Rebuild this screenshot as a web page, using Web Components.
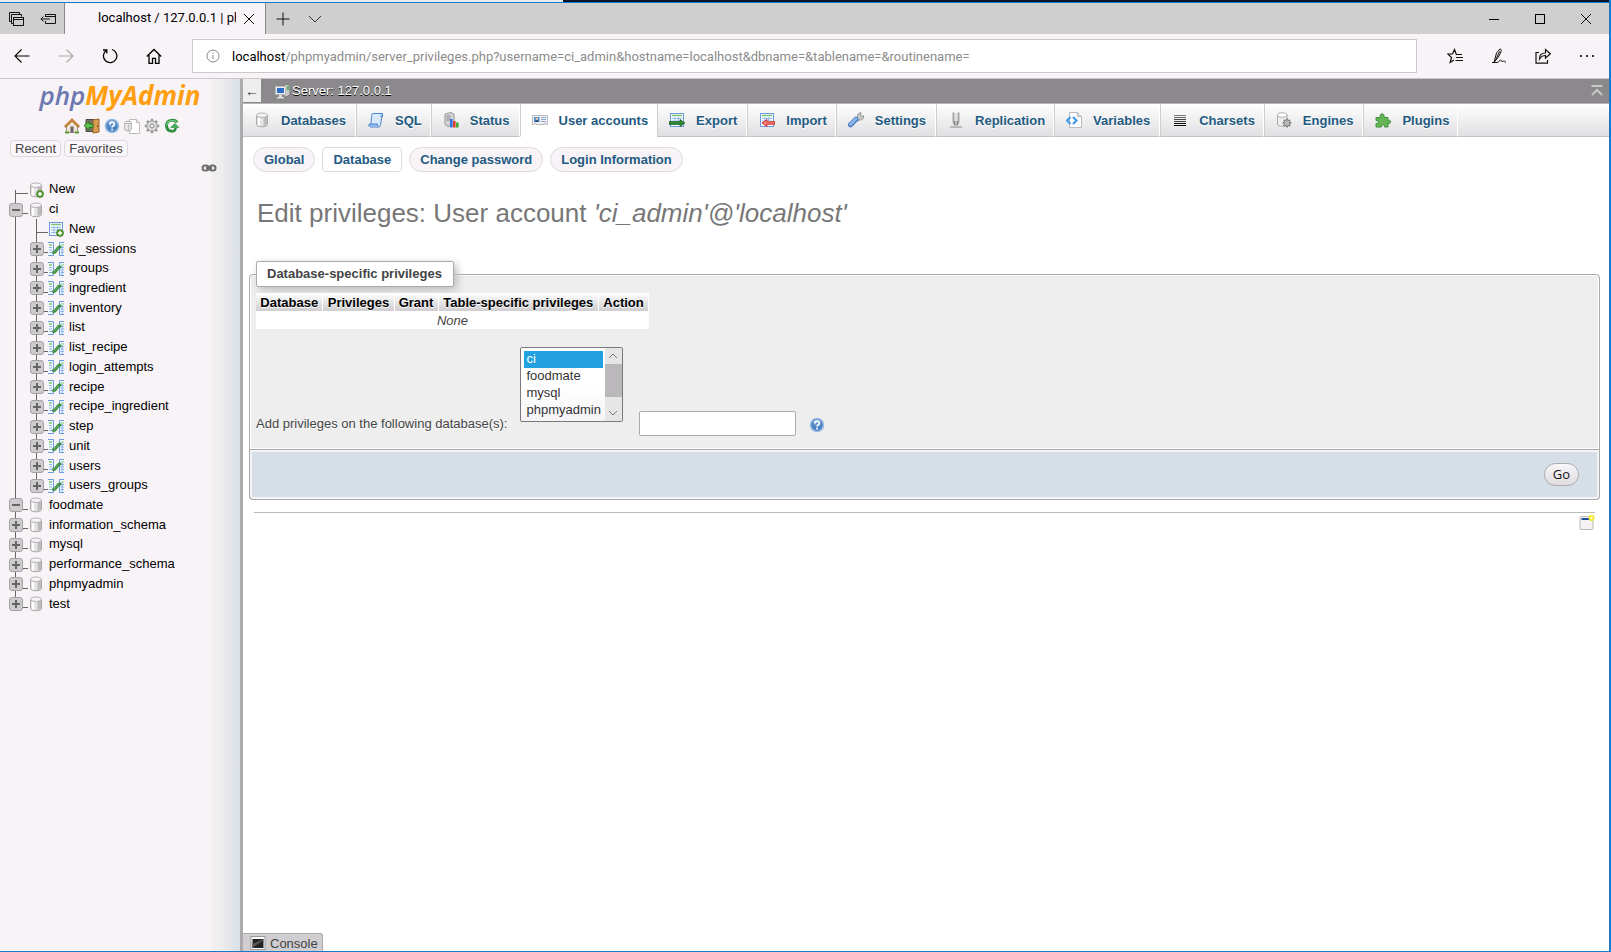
<!DOCTYPE html>
<html lang="en">
<head>
<meta charset="utf-8">
<title>localhost / 127.0.0.1 | phpMyAdmin</title>
<style>
html,body{height:100%}
body{margin:0;font-family:"Liberation Sans",Arial,sans-serif;font-size:13px;color:#444;background:#fff}
</style>
</head>
<body>
<browser-window>
  <browser-titlebar slot="title">localhost / 127.0.0.1 | phpMyAdmin</browser-titlebar>
  <browser-toolbar slot="tools"></browser-toolbar>
  <pma-navigation slot="side"></pma-navigation>
  <pma-page slot="main"></pma-page>
</browser-window>
<script>
const define=(name,html,setup)=>{
  const t=document.createElement('template');
  t.innerHTML='<style>:host,*{box-sizing:border-box}</style>'+html;
  customElements.define(name,class extends HTMLElement{
    constructor(){super();this.attachShadow({mode:'open'}).append(t.content.cloneNode(true));}
    connectedCallback(){if(setup)setup.call(this,this.shadowRoot);}
  });
};

const DB='<path d="M2.5 3.5v9c0 3 11 3 11 0v-9" fill="#e4e2e4" stroke="#aaa"/><path d="M9.500 5v9c2 0 3.500-1 3.500-2V4z" fill="#bdbbbd"/><path d="M4 6v7l2 1V6z" fill="#fff"/><ellipse cx="8" cy="3.200" rx="5.500" ry="2.200" fill="#f6f4f6" stroke="#b5b3b5"/>';
const PLUS='<circle cx="12" cy="12" r="3.5" fill="#5a9e32" stroke="#3d7a1d" stroke-width=".7"/><path d="M12 10v4M10 12h4" stroke="#fff" stroke-width="1.4"/>';
const GRID='<rect x="1.5" y="1.5" width="13" height="13" fill="#f4f9ff" stroke="#6b9add"/><path d="M3 3.5h10" stroke="#7cc36a" stroke-width="1.4"/><path d="M3 6.5h10M3 9h10M3 11.500h10M6 5v8M9.500 5v8" stroke="#9cbce8"/>';
const GEAR='<g stroke="#999" stroke-width="2.4"><path d="M8 .8v14.400M.8 8h14.400M2.900 2.900l10.200 10.200M13.100 2.900L2.900 13.100"/></g><circle cx="8" cy="8" r="5.2" fill="#ddd" stroke="#999"/><circle cx="8" cy="8" r="2" fill="#f7f3f7" stroke="#888"/>';
const ICONS={
 db:DB,
 dbnew:DB+PLUS,
 tablenew:GRID+PLUS,
 table:'<path d="M0 1.500h5.500v13H0" fill="#f4f9ff" stroke="#6b9add"/><path d="M1 4h3" stroke="#7cc36a" stroke-width="1.500"/><path d="M1 6.500h3M1 9h3M1 11.500h3" stroke="#8db2e6"/><path d="M16 1.500h-4.500v13H16" fill="#f4f9ff" stroke="#6b9add"/><path d="M13 4h3" stroke="#7cc36a"/><path d="M12.500 6.500h3.500M12.500 9h3.500M12.500 11.500h3.500M14.200 5v9" stroke="#8db2e6"/><path d="M5.500 11.500l1.500-.5 3.500-4.500 1.500-.5" fill="none" stroke="#3c8d40" stroke-width="3" stroke-linecap="round"/><path d="M5.500 11.200l1.500-.5 3.500-4.500" fill="none" stroke="#69b56b" stroke-width="1"/>',
 home:'<path d="M2.500 8v6.500h11V8L8 3z" fill="#ece5d8" stroke="#9a8f80"/><path d="M.8 8.800L8 2l7.200 6.800" fill="none" stroke="#b5691d" stroke-width="2.400"/><path d="M1 8.200L8 1.600l7 6.600" fill="none" stroke="#e1a153"/><rect x="6.500" y="8.500" width="3" height="6" fill="#666"/><path d="M1 14.500h4M11 14.500h4" stroke="#5a9f3a" stroke-width="2"/>',
 exit:'<path d="M2 1.500h8v12H2z" fill="#777069" stroke="#4d4841"/><path d="M9 2l6-1v13l-6 1z" fill="#d89c52" stroke="#9a6222"/><path d="M13.500 7.500v1.500" stroke="#5b3a10"/><path d="M0 7.500L5 3.500v2.500h4v3.500H5V12z" fill="#62bf4d" stroke="#2d7c22"/>',
 help:'<circle cx="8" cy="8" r="6.500" fill="#4a82c4" stroke="#9dbbe0" stroke-width="1.600"/><circle cx="8" cy="5.500" r="4" fill="#7ba6da" opacity=".6"/><path d="M5.800 6.500c0-3 4.600-3 4.600-.3 0 1.600-2.300 1.500-2.300 3.300" fill="none" stroke="#fff" stroke-width="1.700"/><rect x="7.200" y="10.700" width="1.800" height="1.700" fill="#fff"/>',
 docs:'<path d="M5.500 1.500h7l3 3v11h-10z" fill="#fff" stroke="#bbb"/><path d="M12.500 1.500v3h3" fill="#eee" stroke="#bbb"/><path d="M.8 4.500v7c0 1.500 6.500 1.500 6.500 0v-7" fill="#eee" stroke="#aaa"/><ellipse cx="4" cy="4.500" rx="3.200" ry="1.200" fill="#fff" stroke="#aaa"/><path d="M4.500 6.500v5" stroke="#bbb" stroke-width="1.500"/>',
 gear:GEAR,
 reload:'<path d="M13 4.500C11 .8 2.500 1.500 2.500 7.500c0 3.500 2.500 5.500 5.500 5.800" fill="none" stroke="#2f9140" stroke-width="3"/><path d="M12.500 4C10 1.500 3 2.500 2.800 7.500" fill="none" stroke="#7ccf7f" stroke-width="1.200"/><path d="M8 13.500c2.500 0 3.500-1.500 3.500-3.500" fill="none" stroke="#2f9140" stroke-width="2.600"/><path d="M6.500 9.500L11 5.500l4 4z" fill="#45a955" stroke="#2f9140" stroke-width=".6"/>',
 link:'<g fill="none" stroke="#6d6d6d" stroke-width="2"><rect x="1.500" y="5.500" width="6" height="5" rx="2.500"/><rect x="8.500" y="5.500" width="6" height="5" rx="2.500"/><path d="M5 8h6"/></g>',
 sql:'<path d="M4.500 1.500h10l-2 11c-.3 2-1 2.500-2.500 2.500H2c1.500 0 1-13.500 2.500-13.500z" fill="#d9eaff" stroke="#4a84cf"/><path d="M13 1.500c2 0 2 3 1 3h-1.500M1 14.500c-1-2 .5-3 1.500-2.500h7c0 2 .5 3 1.500 2.500" fill="#8db9ef" stroke="#4a84cf"/>',
 status:'<path d="M2 2l6-1.500 3 1.500v11l-6 1.500-3-2z" fill="#d4d2d4" stroke="#999"/><path d="M3.500 4h4M3.500 6h4M3.500 8h4" stroke="#888"/><rect x="7" y="7" width="2.600" height="8.500" fill="#3573e8"/><rect x="10" y="9" width="2.600" height="6.500" fill="#e23d28"/><rect x="13" y="10.500" width="2.600" height="5" fill="#3bad34"/>',
 users:'<path d="M.5 3.500h15v9H14v-1h-2v1H4v-1H2v1H.5z" fill="#f3f2f5" stroke="#b9b8bd"/><rect x="2" y="5" width="5.500" height="5" fill="#4b8bd9"/><circle cx="4.800" cy="6.700" r="1.200" fill="#f5c896"/><path d="M3 10c0-2.500 3.500-2.500 3.500 0z" fill="#39424f"/><path d="M9 5.500h5M9 7.500h5M9 9.500h5" stroke="#8ba5c9"/>',
 exp:GRID+'<path d="M0 9.500h11V7.500l5 3.500-5 3.500v-2H0z" fill="#2e8632" stroke="#14561a" stroke-width=".6"/>',
 imp:GRID+'<path d="M16 9.800H8V7.500L3 11l5 3.500v-2.300h8z" fill="#f08078" stroke="#d3201b" stroke-width=".9"/>',
 settings:'<path d="M9 6l1-4 3-1.500-.5 3 1.500 1L16 3.500c0 3-1.500 4.500-4.500 4.500L10 9z" fill="#c9c9c9" stroke="#888" stroke-width=".8"/><path d="M8 7.200L2.500 12.800" stroke="#4675bd" stroke-width="5" stroke-linecap="round"/><path d="M8 6.800L2.500 12.400" stroke="#8fb5ee" stroke-width="3" stroke-linecap="round"/>',
 repl:'<path d="M5.500 .5v9l1 3M10.500 .5v9l-1 3" fill="none" stroke="#a5a5a5" stroke-width="2"/><path d="M8 1v12" stroke="#e4e4e4" stroke-width="2"/><path d="M6.500 9v4h3V9" fill="#bbb" stroke="#888"/><path d="M2 15h12" stroke="#aaa" stroke-width="1.500"/>',
 vars:'<path d="M3.500.5h8l4 4v11h-12z" fill="#fcfbff" stroke="#bbb"/><path d="M11.500.5v4h4" fill="#ddd" stroke="#bbb"/><path d="M4.500 5L1 8.500 4.500 12M7 5l3.500 3.500L7 12" fill="none" stroke="#459be8" stroke-width="2.200"/>',
 chars:'<path d="M2 3.500h12" stroke="#777"/><path d="M2 5.500h12" stroke="#666"/><path d="M2 7.500h12M2 9.500h12" stroke="#444"/><path d="M2 11.500h12M2 13.500h12" stroke="#111"/>',
 engines:'<path d="M1.500 3v9c0 3 9.500 3 9.500 0V3" fill="#eee" stroke="#aaa"/><ellipse cx="6.200" cy="3" rx="4.800" ry="2.200" fill="#fff" stroke="#aaa"/><g transform="translate(6 6) scale(.62)"><g stroke="#777" stroke-width="2.600"><path d="M8 .8v14.400M.8 8h14.400M2.900 2.900l10.200 10.200M13.100 2.900L2.900 13.100"/></g><circle cx="8" cy="8" r="5" fill="#ccc" stroke="#777" stroke-width="1.500"/><circle cx="8" cy="8" r="2" fill="#fff" stroke="#666"/></g>',
 plug:'<path d="M1 5.500h4.500c-2-5 5-5 3.500 0h4v3c3.500-1.500 3.500 4 0 3v3.500H9.500c.5-3-3.500-3-3 0H1v-3.500c3 .5 3-3.500 0-3z" fill="#64b554" stroke="#3f9240"/>',
 server:'<path d="M10 1l5 1v10l-4 2h-2V3z" fill="#c5c8c5" stroke="#777"/><path d="M12 4h2M12 6h2" stroke="#3ba24a" stroke-width="1.300"/><rect x=".5" y="3.500" width="10" height="8" fill="#eee" stroke="#bbb"/><rect x="2" y="5" width="7" height="5" fill="#2e6ec9"/><path d="M4 12h3v2h2v1.500H2V14h2z" fill="#ddd"/>',
 consoleico:'<rect x="1" y="1.500" width="14" height="13" fill="#fff" stroke="#999"/><rect x="2.500" y="4" width="11" height="9" fill="#222"/><path d="M2.500 13V9l11-5v1z" fill="#555"/>',
 newwin:'<rect x="1" y="1.500" width="13" height="13" rx="1" fill="#f4f2f4" stroke="#bdbcae"/><rect x="2.500" y="3" width="8" height="2" fill="#1f509e"/><circle cx="12.500" cy="3" r="2.200" fill="#fffbc0" stroke="#f3e81c" stroke-width="1.500"/>',
 top:'<path d="M2.500 3h11" stroke="#c8c8c8" stroke-width="2"/><path d="M3 12l5-5 5 5" fill="none" stroke="#c8c8c8" stroke-width="2"/>',
 bstack:'<g fill="none" stroke="#111"><path d="M3.500 10.500h-2v-9h10v2"/><path d="M5.500 12.500h-2v-9h10v2"/><rect x="5.500" y="6.500" width="10" height="8"/><path d="M5.500 8.500h10"/></g>',
 baside:'<g fill="none" stroke="#111"><path d="M5.500 6V3.500h10v9h-10V10M5.500 5.500h10M.8 8h9M3.500 5.500L1 8l2.500 2.500"/></g>',
 bclose:'<path d="M3 3l10 10M13 3L3 13" stroke="#111" fill="none"/>',
 bplus:'<path d="M8 1.500v13M1.500 8h13" stroke="#111"/>',
 bdown:'<path d="M2 5l6 6 6-6" stroke="#333" fill="none"/>',
 back:'<path d="M1 8h14.500M7.500 1.500L1 8l6.500 6.500" fill="none" stroke="#000" stroke-width="1.100"/>',
 fwd:'<path d="M.5 8H15M8.500 1.500L15 8l-6.500 6.500" fill="none" stroke="#aaa" stroke-width="1.100"/>',
 breload:'<path d="M10 1.500a6.700 6.700 0 1 1-5.500.8M1 2h3.800v3.500" fill="none" stroke="#000" stroke-width="1.300"/>',
 bhome:'<path d="M.8 8.500L8 1.500l7.200 7M3 7v8.300h3.500v-5h3v5H13V7" fill="none" stroke="#000" stroke-width="1.300"/>',
 info:'<circle cx="8" cy="8" r="6" fill="none" stroke="#888"/><path d="M8 7v4M8 4.700v1.200" stroke="#888"/>',
 fav:'<path d="M15 6.500H9.300L7.500 1.500 5.500 6H.8l3.700 3.500-1.300 5L7 12M9 9.500h7M8.500 12.500h7.500" fill="none" stroke="#111" stroke-width="1.200"/>',
 pen:'<path d="M3 14.500L5.500 5 9 .8l1.500 1.400L8 8 3 14.500zM4.500 12.500l4-9M1 14.500h5c3-1 3-3 4-2.500s0 2 1.500 1.500 1.500-1 3.500 1" fill="none" stroke="#111"/>',
 share:'<path d="M4 4.500H1v10.700h11.500V12M4.500 11c0-4 2-6 6-6V1.500l4.800 4.300-4.800 4.300V7.500c-3 0-4.500 1-6 3.500z" fill="none" stroke="#111" stroke-width="1.200"/>',
 dots:'<path d="M1 7h2v2H1zM7 7h2v2H7zM13 7h2v2h-2z" fill="#333"/>',
 min:'<path d="M3 8.500h10" stroke="#000"/>',
 max:'<rect x="3.500" y="3.500" width="9" height="9" fill="none" stroke="#000"/>',
 sup:'<path d="M4 10l4-4 4 4" fill="none" stroke="#777"/>',
 sdown:'<path d="M4 6l4 4 4-4" fill="none" stroke="#777"/>'
};
define('pma-icon','<style>:host{display:block;flex:none;width:16px;height:16px}svg{display:block;width:100%;height:100%}</style><svg viewBox="0 0 16 16" aria-hidden="true"></svg>',
 function(r){r.querySelector('svg').innerHTML=ICONS[this.getAttribute('name')]||'';});

define('browser-window',`<style>
:host{display:grid;grid-template-rows:auto auto minmax(0,1fr);grid-template-columns:243px minmax(0,1fr);height:100%;border:solid #1a7ac8;border-width:0 2px 1px 0}
.desk{height:3px;background:linear-gradient(#1a7ac8,#1a7ac8) 0 2px/100% 1px no-repeat,linear-gradient(90deg,#e9edf2 35%,#06142a 35%)}
.wrap,.top{grid-column:1/3}
</style><div class="wrap"><div class="desk"></div><slot name="title"></slot></div><div class="top"><slot name="tools"></slot></div><slot name="side"></slot><slot name="main"></slot>`);

const BTN='button{display:flex;align-items:center;justify-content:center;border:0;padding:0;margin:0;background:none;font:inherit;color:inherit}';
define('browser-titlebar',`<style>${BTN}
:host{display:flex;height:31px;background:#cfcfcf;font:13px Roboto,"Noto Sans",sans-serif;color:#000}
.left,.right{display:flex}
.left{width:64px;padding-left:8px;gap:16px}
.tab{display:flex;align-items:center;width:202px;border:solid #8a888a;border-width:0 1px;background:#f7f3f7;padding:0 8px 0 33px;gap:5px}
.tab span{flex:1;overflow:hidden;white-space:nowrap;padding-bottom:2px}
.tools{display:flex;padding-left:9px;gap:16px;flex:1}
.right button{width:46px}
</style><div class="left"><button aria-label="Tabs"><pma-icon name="bstack"></pma-icon></button><button aria-label="Set aside"><pma-icon name="baside"></pma-icon></button></div>
<div class="tab"><span><slot></slot></span><button aria-label="Close tab"><pma-icon name="bclose"></pma-icon></button></div>
<div class="tools"><button aria-label="New tab"><pma-icon name="bplus"></pma-icon></button><button aria-label="Tab list"><pma-icon name="bdown"></pma-icon></button></div>
<div class="right"><button aria-label="Minimize"><pma-icon name="min"></pma-icon></button><button aria-label="Maximize"><pma-icon name="max"></pma-icon></button><button aria-label="Close"><pma-icon name="bclose"></pma-icon></button></div>`);

define('browser-toolbar',`<style>${BTN}
:host{display:flex;align-items:center;height:45px;background:#f7f3f7;border-bottom:1px solid #c9c7c9;font:13px Roboto,"Noto Sans",sans-serif;color:#000}
.nav{display:flex;gap:28px;padding-left:14px;width:192px}
.url{display:flex;align-items:center;flex:1;min-width:0;height:34px;border:1px solid #cbc9cb;background:#fff;padding:0 12px;gap:11px}
.url div{color:#8c8c8c;white-space:nowrap;overflow:hidden}.url b{font-weight:400;color:#000}
.acts{display:flex;gap:28px;padding:0 14px 0 30px}
</style><div class="nav"><button aria-label="Back"><pma-icon name="back"></pma-icon></button><button aria-label="Forward"><pma-icon name="fwd"></pma-icon></button><button aria-label="Refresh"><pma-icon name="breload"></pma-icon></button><button aria-label="Home"><pma-icon name="bhome"></pma-icon></button></div>
<div class="url"><pma-icon name="info"></pma-icon><div><b>localhost</b>/phpmyadmin/server_privileges.php?username=ci_admin&amp;hostname=localhost&amp;dbname=&amp;tablename=&amp;routinename=</div></div>
<div class="acts"><button aria-label="Favorites"><pma-icon name="fav"></pma-icon></button><button aria-label="Notes"><pma-icon name="pen"></pma-icon></button><button aria-label="Share"><pma-icon name="share"></pma-icon></button><button aria-label="More"><pma-icon name="dots"></pma-icon></button></div>`);

define('pma-tree-item',`<style>
:host{display:flex;align-items:center;white-space:nowrap}
.guide,.cell{display:none;width:20px;height:100%;--v:linear-gradient(#666,#666);background:var(--v) 7px 0/1px 100% no-repeat}
.cell{display:flex;align-items:center;padding-left:1px;background:var(--v) 7px 0/1px 100% no-repeat,var(--v) 7px 13px/13px 1px no-repeat}
:host([level="1"]) .guide{display:block;width:21px}
:host([level="1"]) .cell{width:19px}
:host([edge="first"]) .cell{background:var(--v) 7px 10px/1px 100% no-repeat,var(--v) 7px 13px/13px 1px no-repeat}
:host([edge="last"]) .cell{background:var(--v) 7px 0/1px 10px no-repeat,var(--v) 7px 13px/13px 1px no-repeat}
button{display:none;width:14px;height:14px;padding:0;border:1px solid #a3a1a3;border-radius:3px;background:linear-gradient(#666,#666) 50% 50%/8px 2px no-repeat,#cecbce}
:host([toggle]) button{display:block}
:host([toggle="+"]) button{background:linear-gradient(#666,#666) 50% 50%/8px 2px no-repeat,linear-gradient(#666,#666) 50% 50%/2px 8px no-repeat,#cecbce}
a{color:#000;text-decoration:none;margin-left:5px;line-height:18px;padding-bottom:1px}
</style><span class="guide"></span><span class="cell"><button></button></span><pma-icon></pma-icon><a href="#"><slot></slot></a>`,
 function(r){const i=document.createElement('pma-icon');i.setAttribute('name',this.getAttribute('icon'));r.querySelector('pma-icon').replaceWith(i);
 r.querySelector('button').setAttribute('aria-label',this.getAttribute('toggle')==='+'?'Expand':'Collapse');});

define('pma-navigation',`<style>${BTN}
:host{display:block;min-height:0;border-right:3px solid #acaaac;background:linear-gradient(90deg,#f0f0f0,#ecedee 35%,#e6e6e8 60%,#d9e1e7) 100% 0/28px 100% no-repeat,#f7f3f7}
.logo{display:block;text-decoration:none;font:italic 700 26px/32px "Open Sans","Noto Sans",sans-serif;color:#ff9e0f;text-align:center}
.logo span{color:#6c78af;font-weight:600}
.icons{display:flex;gap:4px;padding:7px 0 0 64px}
.quick{display:flex;gap:3px;padding:6px 0 0 10px}
.quick button{border:1px solid #dcd8dc;border-radius:4px;height:17px;padding:0 4px;color:#444;background:#f9f6f9;font-size:13px}
.link{display:flex;justify-content:flex-end;padding:3px 23px 0 0}
.tree{display:grid;grid-auto-rows:1fr;height:434px;padding-left:8px;margin-top:4px}
</style><a class="logo" href="#"><span>php</span>MyAdmin</a>
<div class="icons"><pma-icon name="home"></pma-icon><pma-icon name="exit"></pma-icon><pma-icon name="help"></pma-icon><pma-icon name="docs"></pma-icon><pma-icon name="gear"></pma-icon><pma-icon name="reload"></pma-icon></div>
<div class="quick"><button>Recent</button><button>Favorites</button></div>
<div class="link"><pma-icon name="link"></pma-icon></div>
<nav class="tree"></nav>`,function(r){
 const tree=r.querySelector('.tree');
 const add=(label,icon,level,toggle,edge)=>{const e=document.createElement('pma-tree-item');e.textContent=label;e.setAttribute('icon',icon);e.setAttribute('level',level);if(toggle)e.setAttribute('toggle',toggle);if(edge)e.setAttribute('edge',edge);tree.append(e);};
 add('New','dbnew',0,'','first');add('ci','db',0,'-');add('New','tablenew',1);
 const tables=['ci_sessions','groups','ingredient','inventory','list','list_recipe','login_attempts','recipe','recipe_ingredient','step','unit','users','users_groups'];
 tables.forEach((t,i)=>add(t,'table',1,'+',i===tables.length-1?'last':''));
 add('foodmate','db',0,'-');
 ['information_schema','mysql','performance_schema','phpmyadmin'].forEach(t=>add(t,'db',0,'+'));
 add('test','db',0,'+','last');
});

define('pma-tab',`<style>
:host{display:block;border-right:1px solid #fff;border-left:1px solid #cecece;border-bottom:1px solid #c4c2c4}
:host(:first-child){border-left:0}
:host([active]){background:#fff;border-bottom-color:#fff}
a{display:flex;align-items:center;height:32px;padding:0 9px 0 11px;gap:11px;color:#235a81;font-weight:700;text-decoration:none;text-shadow:0 1px 0 #fff;white-space:nowrap}
:host(:nth-child(even)) a{padding-right:8px}
</style><a href="#"><pma-icon></pma-icon><slot></slot></a>`,
 function(r){const i=document.createElement('pma-icon');i.setAttribute('name',this.getAttribute('icon'));r.querySelector('pma-icon').replaceWith(i);});

define('pma-pill',`<style>
:host{display:block}
a{display:block;height:25px;line-height:23px;padding:0 10px;border:1px solid #dedade;border-radius:13px;background:#f7f3f7;color:#235a81;font-weight:700;text-decoration:none;white-space:nowrap}
:host([active]) a{border-radius:4px;background:#fff}
</style><a href="#"><slot></slot></a>`);

define('pma-fieldset',`<style>
:host{display:block}
fieldset{margin:0;min-width:0;border:1px solid #aaa;border-radius:4px 4px 0 0;background:#eee;padding:6px 6px 13px;text-shadow:0 1px 0 #fff;box-shadow:inset 0 0 0 1px #fff}
legend{border:1px solid #aaa;border-radius:2px;background:#fff;padding:0 11px 0 10px;line-height:24px;font-weight:700;box-shadow:3px 3px 8px #bbb;color:#444}
footer{display:flex;justify-content:flex-end;align-items:center;height:50px;border:1px solid #aaa;border-top:0;border-radius:0 0 4px 4px;background:#d6dee7;box-shadow:inset 0 0 0 2px #f2f4f7;padding-right:20px}
</style><fieldset><legend><slot name="legend"></slot></legend><slot></slot></fieldset><footer><slot name="footer"></slot></footer>`);

define('pma-privileges',`<style>
:host{display:block}
table{border-collapse:separate;border-spacing:0;width:393px;color:#000}
th{height:18px;padding:0 4px;line-height:17px;font-weight:700;white-space:nowrap;background:linear-gradient(#fff,#cfcdcf);border-right:1px solid #fff}
td{height:18px;padding:1px 0 0;line-height:17px;background:#fff;text-align:center;color:#444}
.row{display:flex;align-items:flex-end;padding-top:18px}
label{padding:0 13px 4px 0;line-height:16px;white-space:nowrap}
.list{display:flex;width:103px;height:75px;margin:0 16px 14px 0;border:1px solid #7a787a;border-radius:2px;background:linear-gradient(#fff 55%,#f5f3f5)}
select{flex:1;min-width:0;height:73px;margin:0;padding:3px 2px 0 3px;border:0;background:none;font:13px "Liberation Sans",Arial,sans-serif;color:#333;outline:0}
option{min-height:17px;height:17px;padding:0 2px;line-height:16px}
option:checked{background:linear-gradient(#23a0df,#23a0df);-webkit-text-fill-color:#fff}
.bar{display:flex;flex-direction:column;width:17px;background:#e7e6e7}
.bar i{height:33px;margin-bottom:auto;background:#bab8ba}
.bar pma-icon{margin:0}
input{width:157px;height:25px;padding:0 4px;border:1px solid #aaa;border-radius:2px;background:#fff;font:inherit}
pma-icon{margin:0 0 3px 13px}
</style>
<table><thead><tr><th>Database</th><th>Privileges</th><th>Grant</th><th>Table-specific privileges</th><th>Action</th></tr></thead><tbody><tr><td colspan="5"><i>None</i></td></tr></tbody></table>
<div class="row"><label for="dbs">Add privileges on the following database(s):</label>
<div class="list"><select id="dbs" multiple size="4"><option selected>ci</option><option>foodmate</option><option>mysql</option><option>phpmyadmin</option><option>test</option></select><span class="bar" aria-hidden="true"><pma-icon name="sup"></pma-icon><i></i><pma-icon name="sdown"></pma-icon></span></div>
<input type="text" aria-label="Database name"><pma-icon name="help"></pma-icon></div>`);

define('pma-page',`<style>${BTN}
:host{display:flex;flex-direction:column;min-width:0;background:#fff}
.server{display:flex;align-items:center;height:25px;background:#8b898b;border-bottom:1px solid #b5b3b5;color:#fff;text-shadow:0 1px 0 #000;padding-right:4px}
.server .fold{align-self:flex-start;width:18px;height:23px;background:#eee;color:#333;text-shadow:none;font-size:14px;margin-right:14px}
.server a{flex:1;color:#fff;text-decoration:none;margin-left:1px;padding-bottom:1px}
.tabs{display:flex;background:linear-gradient(#fff,#dfdde0);box-shadow:inset 0 -1px #c4c2c4}
.pills{display:flex;gap:7px;padding:10px 10px 0}
h2{margin:22px 14px 0;font-weight:400;font-size:26px;line-height:38px;color:#777;text-shadow:0 1px 0 #fff}
.form{padding:29px 9px 0 6px}
.go{height:23px;padding:0 8px 1px;border:1px solid #aaa;border-radius:12px;background:linear-gradient(#f9f6f9,#e0dce0);color:#111;font:13px "Open Sans","Noto Sans",sans-serif}
.foot{display:flex;justify-content:flex-end;margin:12px 14px 0 11px;border-top:1px solid #bbb;padding:2px 0}
.console{display:flex;align-items:center;align-self:flex-start;margin-top:auto;height:18px;gap:4px;padding:1px 4px 0 7px;border:1px solid #aaa;border-width:1px 1px 0 0;border-radius:0 3px 0 0;background:#d0ced0;color:#444}
</style>
<div class="server"><button class="fold" aria-label="Collapse panel">←</button><pma-icon name="server"></pma-icon><a href="#">Server: 127.0.0.1</a><pma-icon name="top"></pma-icon></div>
<nav class="tabs"><pma-tab icon="db">Databases</pma-tab><pma-tab icon="sql">SQL</pma-tab><pma-tab icon="status">Status</pma-tab><pma-tab icon="users" active>User accounts</pma-tab><pma-tab icon="exp">Export</pma-tab><pma-tab icon="imp">Import</pma-tab><pma-tab icon="settings">Settings</pma-tab><pma-tab icon="repl">Replication</pma-tab><pma-tab icon="vars">Variables</pma-tab><pma-tab icon="chars">Charsets</pma-tab><pma-tab icon="engines">Engines</pma-tab><pma-tab icon="plug">Plugins</pma-tab></nav>
<nav class="pills"><pma-pill>Global</pma-pill><pma-pill active>Database</pma-pill><pma-pill>Change password</pma-pill><pma-pill>Login Information</pma-pill></nav>
<h2>Edit privileges: User account <i>'ci_admin'@'localhost'</i></h2>
<div class="form"><pma-fieldset><span slot="legend">Database-specific privileges</span><pma-privileges></pma-privileges><button class="go" slot="footer">Go</button></pma-fieldset></div>
<div class="foot"><pma-icon name="newwin"></pma-icon></div>
<div class="console"><pma-icon name="consoleico"></pma-icon>Console</div>`);
</script>
</body>
</html>
